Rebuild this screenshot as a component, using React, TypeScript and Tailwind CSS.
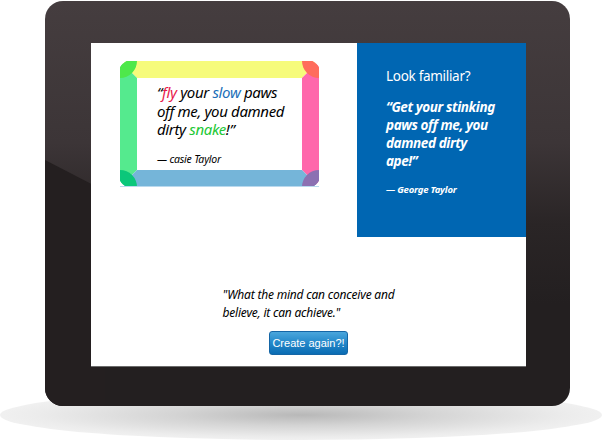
import React from "react";

const T = 17;
const W = 199;
const H = 126;
const R = 13;

const QuoteFrame = () => (
  <div className="relative h-[126px] w-[199px]">
    <svg className="absolute inset-0" width={W} height={H} viewBox={`0 0 ${W} ${H}`}>
      <polygon points={`0,0 ${W},0 ${W - T},${T} ${T},${T}`} fill="#f6fb7b" />
      <polygon points={`0,0 ${T},${T} ${T},${H - T} 0,${H}`} fill="#55ea8e" />
      <polygon points={`${W},0 ${W},${H} ${W - T},${H - T} ${W - T},${T}`} fill="#ff67ab" />
      <polygon points={`0,${H} ${T},${H - T} ${W - T},${H - T} ${W},${H}`} fill="#75b5d9" />
      {/* white outer tips */}
      <path d={`M0,0 L${T},0 A${R},${R} 0 0 0 0,${T} Z`} fill="#fff" />
      <path d={`M${W},0 L${W},${T} A${R},${R} 0 0 0 ${W - T},0 Z`} fill="#fff" />
      <path d={`M0,${H} L0,${H - T} A${R},${R} 0 0 0 ${T},${H} Z`} fill="#fff" />
      <path d={`M${W},${H} L${W - T},${H} A${R},${R} 0 0 0 ${W},${H - T} Z`} fill="#fff" />
      {/* corner overlaps */}
      <path d={`M${T},0 A${R},${R} 0 0 0 0,${T} A${T},${T} 0 0 0 ${T},0 Z`} fill="#4ee84b" />
      <path d={`M${W - T},0 A${R},${R} 0 0 1 ${W},${T} A${T},${T} 0 0 1 ${W - T},0 Z`} fill="#ff6c5c" />
      <path d={`M0,${H - T} A${R},${R} 0 0 0 ${T},${H} A${T},${T} 0 0 0 0,${H - T} Z`} fill="#0bc77a" />
      <path d={`M${W},${H - T} A${R},${R} 0 0 1 ${W - T},${H} A${T},${T} 0 0 1 ${W},${H - T} Z`} fill="#8c70b2" />
      <line x1="0" y1={H - 0.5} x2={W} y2={H - 0.5} stroke="#b9d9ee" />
    </svg>
    <div className="relative pl-[37px] pt-[22px] font-['Noto_Sans'] italic text-black">
      <p className="text-[15px] leading-[18.5px] tracking-[-0.35px]">
        “<span className="text-[#e8174a]">fly</span> your{" "}
        <span className="text-[#1b6fb9]">slow</span> paws
        <br />
        off me, you damned
        <br />
        dirty <span className="text-[#22c835]">snake</span>!”
      </p>
      <p className="mt-[13px] text-[10.5px] leading-[14px] tracking-[-0.2px]">— casie Taylor</p>
    </div>
  </div>
);

export default function App() {
  return (
    <div className="relative h-[443px] w-[602px] overflow-hidden bg-white">
      {/* floor shadow */}
      <div className="absolute left-[0px] top-[390px] h-[50px] w-[602px] rounded-[50%] bg-[radial-gradient(ellipse_at_center,#b8b8b8_0%,#d4d4d4_30%,#ececec_62%,rgba(255,255,255,0)_100%)]" />

      <div className="relative ml-[45px] mt-[1px] h-[405px] w-[525px] overflow-hidden rounded-[18px] bg-[linear-gradient(to_bottom,#453d3f_0%,#3c3537_35%,#2a2526_55%,#231f20_75%)] pb-[40px] pl-[46px] pr-[44px] pt-[42px]">
        <div className="absolute inset-0 bg-[#241f20] [clip-path:polygon(0_159px,60px_190px,60px_100%,0_100%)]" />

        <div className="relative flex h-[323px] w-[435px] flex-col bg-white shadow-[0_1px_0_#6b6b6b]">
          <div className="flex h-[194px]">
            <div className="flex-1 pl-[29px] pt-[18px]">
              <QuoteFrame />
            </div>
            <div className="w-[169px] bg-[#0066b2] pl-[29px] pt-[24px] font-['Noto_Sans'] text-white">
              <p className="text-[13.5px] leading-[18px] tracking-[-0.3px]">Look familiar?</p>
              <p className="mt-[13px] whitespace-nowrap text-[13.5px] font-bold italic leading-[18px] tracking-[-0.4px]">
                “Get your stinking
                <br />
                paws off me, you
                <br />
                damned dirty
                <br />
                ape!”
              </p>
              <p className="mt-[13px] whitespace-nowrap text-[9.5px] font-bold italic leading-[14px] tracking-[-0.2px]">— George Taylor</p>
            </div>
          </div>

          <div className="mt-[49px] flex flex-col items-center">
            <p className="whitespace-nowrap font-['Noto_Sans'] text-[12px] italic leading-[18px] tracking-[-0.2px] text-black">
              "What the mind can conceive and
              <br />
              believe, it can achieve."
            </p>
            <button className="mt-[9px] h-[24px] w-[79px] whitespace-nowrap rounded-[3px] border border-[#1566a6] bg-[linear-gradient(to_bottom,#4aa6dc_0%,#2387c9_50%,#0a6cb3_100%)] p-0 font-['Liberation_Sans'] text-[11px] text-white">
              Create again?!
            </button>
          </div>
        </div>
      </div>
    </div>
  );
}
